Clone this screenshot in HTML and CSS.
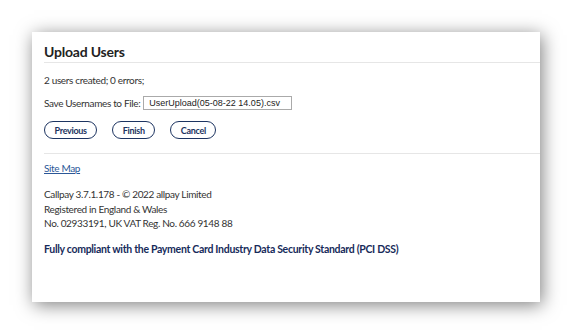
FILE: index.html
```html
<!DOCTYPE html>
<html lang="en">
<head>
  <meta charset="UTF-8">
  <meta name="viewport" content="width=device-width, initial-scale=1.0">
  <title>Upload Users</title>
  <link rel="stylesheet" href="styles.css">
</head>
<body>
  <div class="panel">
    <h1>Upload Users</h1>

    <p class="result">2 users created; 0 errors;</p>

    <div class="save-row">
      <label for="save-file">Save Usernames to File:</label>
      <input type="text" id="save-file" value="UserUpload(05-08-22 14.05).csv">
    </div>

    <div class="actions">
      <button type="button" class="pill">Previous</button>
      <button type="button" class="pill">Finish</button>
      <button type="button" class="pill">Cancel</button>
    </div>

    <!-- Footer -->
    <div class="footer">
      <a href="#" class="site-map">Site Map</a>
      <p class="legal">
        Callpay 3.7.1.178 - © 2022 allpay Limited<br>
        Registered in England &amp; Wales<br>
        No. 02933191, UK VAT Reg. No. 666 9148 88
      </p>
      <p class="pci">Fully compliant with the Payment Card Industry Data Security Standard (PCI DSS)</p>
    </div>
  </div>
</body>
</html>
```

FILE: styles.css
```css
* {
  margin: 0;
  padding: 0;
  box-sizing: border-box;
}

body {
  font-family: Lato, "Open Sans", sans-serif;
  font-size: 10px;
  letter-spacing: -0.35px;
  color: #333;
  background: #fff;
  padding: 32px;
}

.panel {
  width: 508px;
  min-height: 270px;
  background: white;
  padding: 9px 0 0 12px;
  box-shadow: 2px 3px 17px rgba(0,0,0,0.5);
}

h1 {
  font-size: 14px;
  line-height: 21px;
  font-weight: 700;
  letter-spacing: -0.2px;
  color: #222;
  border-bottom: 1px solid #e6e6e6;
}

.result {
  margin-top: 10px;
  line-height: 15px;
}

.save-row {
  display: flex;
  align-items: center;
  gap: 3px;
  margin-top: 8px;
}

.save-row input {
  width: 149px;
  height: 14px;
  padding: 0 5px;
  border: 1px solid #aaa;
  font-family: "Liberation Sans", Arial, sans-serif;
  font-size: 9px;
  letter-spacing: 0;
  color: #222;
}

.actions {
  display: flex;
  gap: 15px;
  margin-top: 11px;
}

.pill {
  height: 18px;
  padding: 0 9.5px;
  background: white;
  border: 1px solid #1d3461;
  border-radius: 9px;
  font-family: inherit;
  font-size: 9px;
  font-weight: 700;
  letter-spacing: -0.3px;
  color: #1d3461;
  cursor: pointer;
}

.footer {
  margin-top: 14px;
  padding-top: 7px;
  border-top: 1px solid #e6e6e6;
}

.site-map {
  display: inline-block;
  line-height: 15px;
  color: #2b5797;
}

.legal {
  margin-top: 11px;
  line-height: 14.5px;
}

.pci {
  margin-top: 11px;
  font-size: 10.5px;
  line-height: 15px;
  font-weight: 700;
  letter-spacing: -0.3px;
  color: #172b5a;
}
```
